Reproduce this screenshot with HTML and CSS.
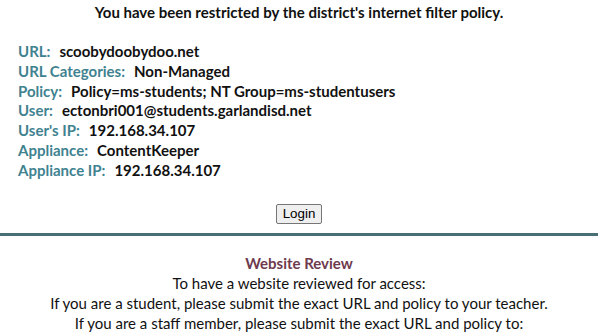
FILE: index.html
```html
<!DOCTYPE html>
<html>
<head>
<meta charset="utf-8">
<link rel="stylesheet" href="styles.css">
</head>
<body>
<h1 class="title">You have been restricted by the district's internet filter policy.</h1>
<div class="info">
  <div class="row"><span class="label">URL:</span><span class="value">scoobydoobydoo.net</span></div>
  <div class="row"><span class="label">URL Categories:</span><span class="value">Non-Managed</span></div>
  <div class="row"><span class="label">Policy:</span><span class="value">Policy=ms-students; NT Group=ms-studentusers</span></div>
  <div class="row"><span class="label">User:</span><span class="value">ectonbri001@students.garlandisd.net</span></div>
  <div class="row"><span class="label">User's IP:</span><span class="value">192.168.34.107</span></div>
  <div class="row"><span class="label">Appliance:</span><span class="value">ContentKeeper</span></div>
  <div class="row"><span class="label">Appliance IP:</span><span class="value">192.168.34.107</span></div>
</div>
<div class="login-wrap"><button class="login">Login</button></div>
<hr class="rule">
<div class="review">
  <div class="review-title">Website Review</div>
  <div>To have a website reviewed for access:</div>
  <div>If you are a student, please submit the exact URL and policy to your teacher.</div>
  <div>If you are a staff member, please submit the exact URL and policy to:</div>
</div>
</body>
</html>
```

FILE: styles.css
```css
html, body {
  margin: 0;
  padding: 0;
  background: #ffffff;
}
body {
  font-family: Lato, "Open Sans", sans-serif;
  color: #111111;
}
.title {
  font-size: 15px;
  font-weight: 700;
  text-align: center;
  margin: 0;
  padding-top: 3px;
  line-height: 18px;
}
.info {
  padding: 21px 0 0 18px;
  font-size: 15px;
  font-weight: 700;
}
.row {
  height: 19.8px;
  line-height: 19.8px;
}
.label {
  color: #3f8290;
  margin-right: 9px;
}
.value {
  color: #111111;
}
.login-wrap {
  text-align: center;
  padding-top: 23px;
  height: 20px;
}
.login {
  font-family: "Liberation Sans", Arial, sans-serif;
  font-size: 13.33px;
  color: #000;
  background: #efefef;
  border: 1px solid #767676;
  border-radius: 2px;
  padding: 1px 6px;
  height: 20px;
  margin: 0;
  vertical-align: top;
}
.rule {
  border: none;
  height: 3px;
  background: #4a6e76;
  margin: 9px 0 0 0;
}
.review {
  text-align: center;
  font-size: 15px;
  line-height: 20px;
  padding-top: 17px;
  color: #111111;
}
.review-title {
  color: #6e3a4e;
  font-weight: 700;
  font-size: 15px;
}
```
